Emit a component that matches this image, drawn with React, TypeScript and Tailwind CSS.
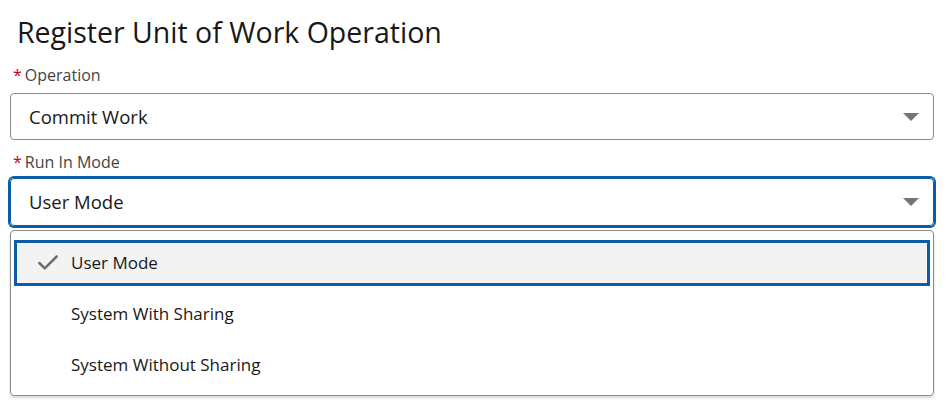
import { Check } from 'lucide-react';

const options = ['User Mode', 'System With Sharing', 'System Without Sharing'];

function Caret() {
  return (
    <svg width="16" height="8" viewBox="0 0 16 8" className="shrink-0">
      <path d="M0 0 H16 L8 8 Z" fill="#747474" />
    </svg>
  );
}

function Label({ text }: { text: string }) {
  return (
    <div className="flex h-[24px] items-center pl-[3px] text-[16px] text-[#444444]">
      <span className="mr-[3px] text-[#ba0517]">*</span>
      {text}
    </div>
  );
}

export default function App() {
  return (
    <div
      className="h-[417px] w-[947px] overflow-hidden bg-white pl-[10px] pr-[13px]"
      style={{ fontFamily: '"Open Sans", "Noto Sans", sans-serif' }}
    >
      <h1 className="h-[63px] pl-[7px] pt-[13px] text-[28.5px] leading-[38px] text-[#181818]">
        Register Unit of Work Operation
      </h1>

      <Label text="Operation" />
      <div className="mt-[6px] flex h-[47px] items-center justify-between rounded-[4px] border border-[#8c8c8c] pl-[18px] pr-[14px] text-[18.5px] text-[#181818]">
        <span>Commit Work</span>
        <Caret />
      </div>

      <div className="mt-[10px]">
        <Label text="Run In Mode" />
      </div>
      <div className="mt-[4px] flex h-[48px] items-center justify-between rounded-[4px] border border-[#0b5cab] pl-[18px] pr-[14px] text-[18.5px] text-[#181818] ring-2 ring-[#0b5cab]">
        <span>User Mode</span>
        <Caret />
      </div>

      <div className="mt-[4px] flex h-[166px] flex-col gap-[5px] rounded-[4px] border border-[#8c8c8c] px-[3px] pb-[7px] pt-[9px] shadow-[0_2px_3px_rgba(0,0,0,0.16)]">
        {options.map((opt, i) => (
          <div
            key={opt}
            className={
              i === 0
                ? 'flex h-[46px] shrink-0 items-center border-[3px] border-[#0b5cab] bg-[#f3f3f3] pl-[18px] text-[17px] text-[#181818]'
                : 'flex h-[46px] shrink-0 items-center border-[3px] border-transparent pl-[18px] text-[17px] text-[#181818]'
            }
          >
            <span className="flex w-[36px] items-center">
              {i === 0 && <Check size={26} strokeWidth={2.3} color="#706e6b" />}
            </span>
            {opt}
          </div>
        ))}
      </div>
    </div>
  );
}
